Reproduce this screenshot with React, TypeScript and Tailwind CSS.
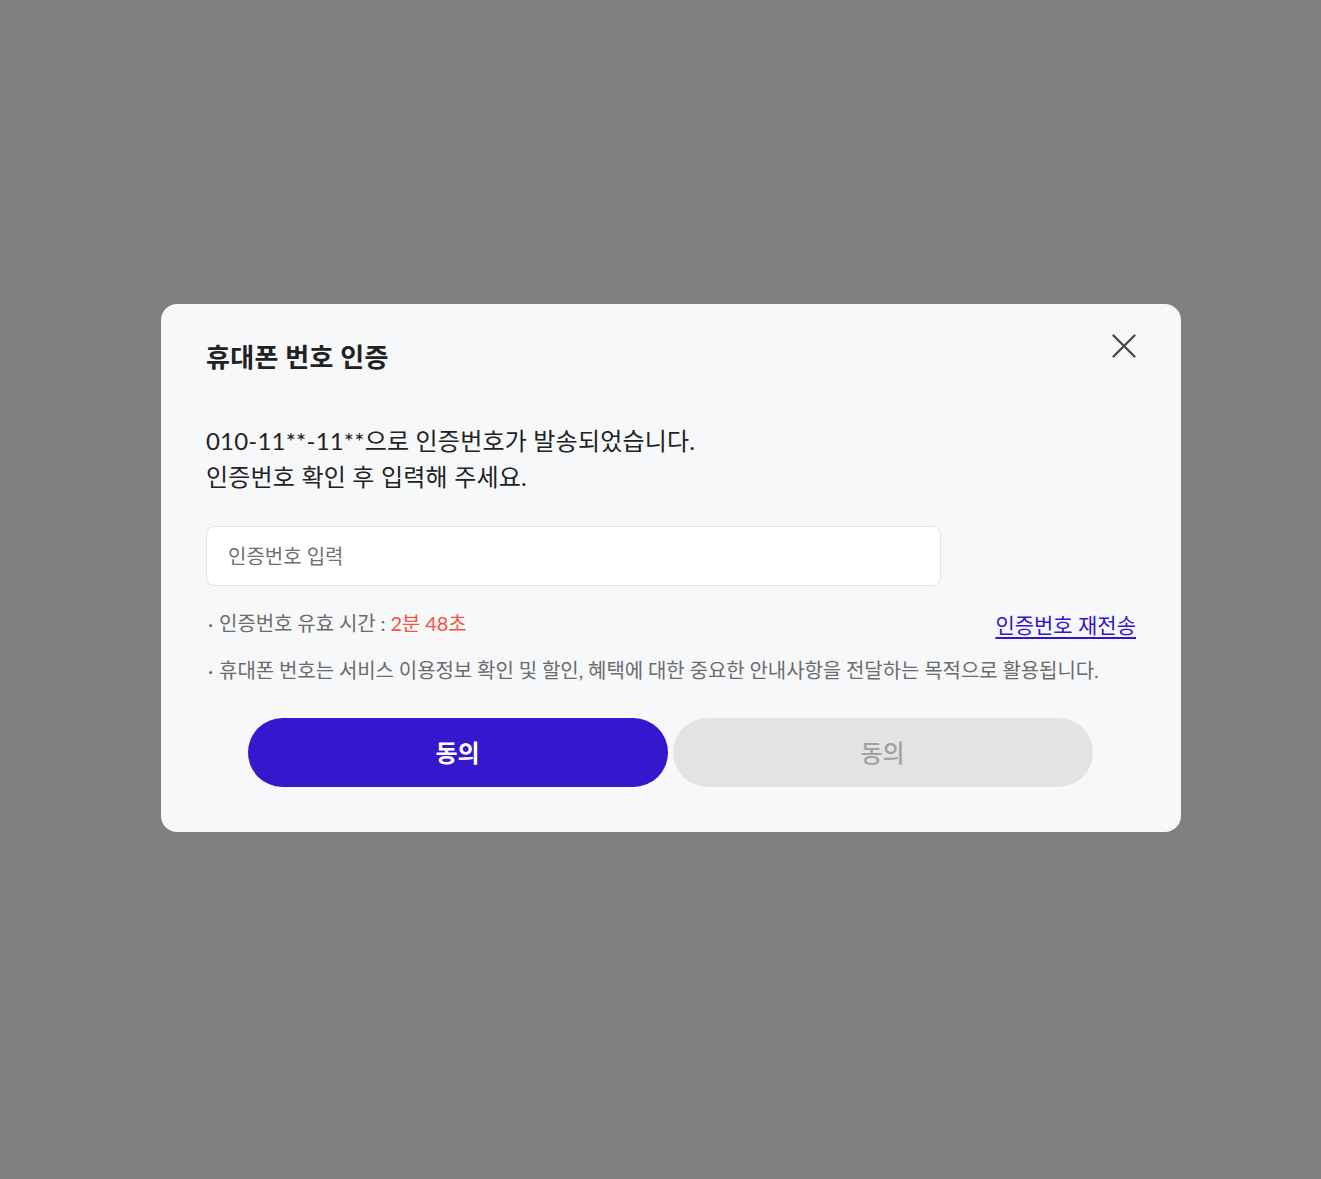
import React from 'react';

const font = { fontFamily: 'Lato, "Noto Sans CJK KR", sans-serif' };

function CloseIcon() {
  return (
    <svg width="24" height="24" viewBox="0 0 24 24" fill="none">
      <path d="M1.5 1.5L22.5 22.5M22.5 1.5L1.5 22.5" stroke="#474747" strokeWidth="2.3" strokeLinecap="round" />
    </svg>
  );
}

export default function App() {
  return (
    <div className="w-full h-[1179px] bg-[#7e7f81] pt-[304px] pl-[161px]" style={font}>
      <div className="relative w-[1020px] h-[528px] rounded-[16px] bg-[#f7f8fa] px-[45px] pt-[36px]">
        <button className="absolute right-[45px] top-[30px]" aria-label="닫기">
          <CloseIcon />
        </button>

        <h2 className="text-[26px] leading-[34px] font-bold text-[#222] tracking-[0.3px]">
          휴대폰 번호 인증
        </h2>

        <p className="mt-[49px] text-[24px] leading-[36px] text-[#222] tracking-[0.2px]">
          010-11**-11**으로 인증번호가 발송되었습니다.
          <br />
          인증번호 확인 후 입력해 주세요.
        </p>

        <input
          className="mt-[31px] block w-[735px] h-[60px] rounded-[8px] border border-[#e1e3e7] bg-white px-[21px] text-[20px] text-[#222] placeholder:text-[#707070] outline-none"
          placeholder="인증번호 입력"
          style={font}
        />

        <div className="mt-[21px] flex items-center justify-between">
          <p className="text-[20px] leading-[28px] text-[#6b6b6b] tracking-[-0.1px]">
            <span className="ml-[2px] mr-[6px]">·</span>인증번호 유효 시간 : <span className="text-[#f4543f]">2분 48초</span>
          </p>
          <a
            href="#"
            className="text-[21px] leading-[28px] text-[#3515cc] underline underline-offset-[4px] mt-[4px]"
          >
            인증번호 재전송
          </a>
        </div>

        <p className="mt-[17px] text-[20px] leading-[28px] text-[#6b6b6b] tracking-[-0.1px]">
          <span className="ml-[2px] mr-[6px]">·</span>휴대폰 번호는 서비스 이용정보 확인 및 할인, 혜택에 대한 중요한 안내사항을 전달하는 목적으로 활용됩니다.
        </p>

        <div className="mt-[34px] flex justify-center gap-[5px] pr-[2px]">
          <button className="w-[420px] h-[69px] rounded-full bg-[#3617ce] text-white text-[24px] font-bold">
            동의
          </button>
          <button className="w-[420px] h-[69px] rounded-full bg-[#e2e3e5] text-[#a2a2a2] text-[24px] font-medium">
            동의
          </button>
        </div>
      </div>
    </div>
  );
}
